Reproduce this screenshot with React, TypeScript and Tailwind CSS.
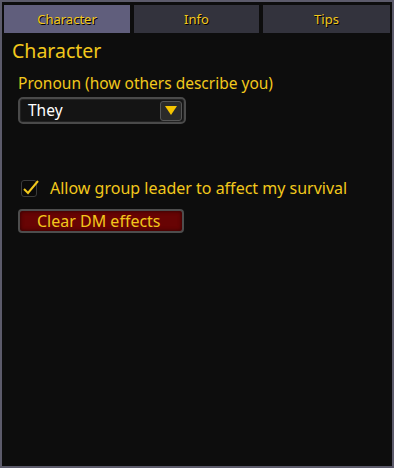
import React from "react";

const gold = "text-[#f2c81c]";

function Tab({ label, active, w }: { label: string; active?: boolean; w: string }) {
  return (
    <div
      className={`${w} h-[28px] flex items-center justify-center pt-[1px] text-[13px] ${gold} [text-shadow:1px_1px_0_#000] ${
        active ? "bg-[#605e7c]" : "bg-[#33333d]"
      }`}
    >
      {label}
    </div>
  );
}

export default function App() {
  return (
    <div
      className="w-[394px] h-[468px] bg-[#0d0d0d] border-2 border-[#5c5b6b] flex flex-col"
      style={{ fontFamily: '"Noto Sans", "Open Sans", sans-serif' }}
    >
      <div className="flex gap-[4px] pt-[3px] pl-[2px]">
        <Tab label="Character" active w="w-[126px]" />
        <Tab label="Info" w="w-[125px]" />
        <Tab label="Tips" w="w-[127px]" />
      </div>
      <div className="pl-[10px] pt-[5px]">
        <div className={`text-[19.5px] leading-[26px] ${gold}`}>Character</div>
        <div className="pl-[6px]">
          <div className={`mt-[9px] text-[15.5px] leading-[20px] ${gold}`}>Pronoun (how others describe you)</div>
          <div className="mt-[4px] w-[168px] h-[27px] rounded-[5px] border-2 border-[#4a4a4a] bg-[#141414] flex items-center justify-between pl-[8px] pr-[2px] shadow-[inset_0_0_0_1px_#222]">
            <span className="text-white text-[15.5px]">They</span>
            <div className="w-[22px] h-[20px] rounded-[3px] border border-[#555] bg-[#2a2a2a] flex items-center justify-center">
              <svg width="12" height="9" viewBox="0 0 12 9">
                <path d="M0 0 H12 L6 9 Z" fill="#f5c400" />
              </svg>
            </div>
          </div>
          <div className="mt-[52px] flex items-center gap-[13px] pl-[3px]">
            <div className="w-[16px] h-[17px] rounded-[3px] border border-[#3a3a3a] bg-[#0a0a0a] relative">
              <svg className="absolute -top-[3px] -left-[1px]" width="20" height="20" viewBox="0 0 20 20">
                <path d="M3 11 L7 15 L17 3" fill="none" stroke="#f2c81c" strokeWidth="2" />
              </svg>
            </div>
            <span className={`text-[16px] ${gold}`}>Allow group leader to affect my survival</span>
          </div>
          <div className="mt-[9px] w-[166px] h-[24px] rounded-[4px] border-2 border-[#4d4d4d] bg-[#680404] flex items-center pl-[17px] shadow-[inset_0_0_4px_#2a0000]">
            <span className={`text-[16px] ${gold}`}>Clear DM effects</span>
          </div>
        </div>
      </div>
    </div>
  );
}
